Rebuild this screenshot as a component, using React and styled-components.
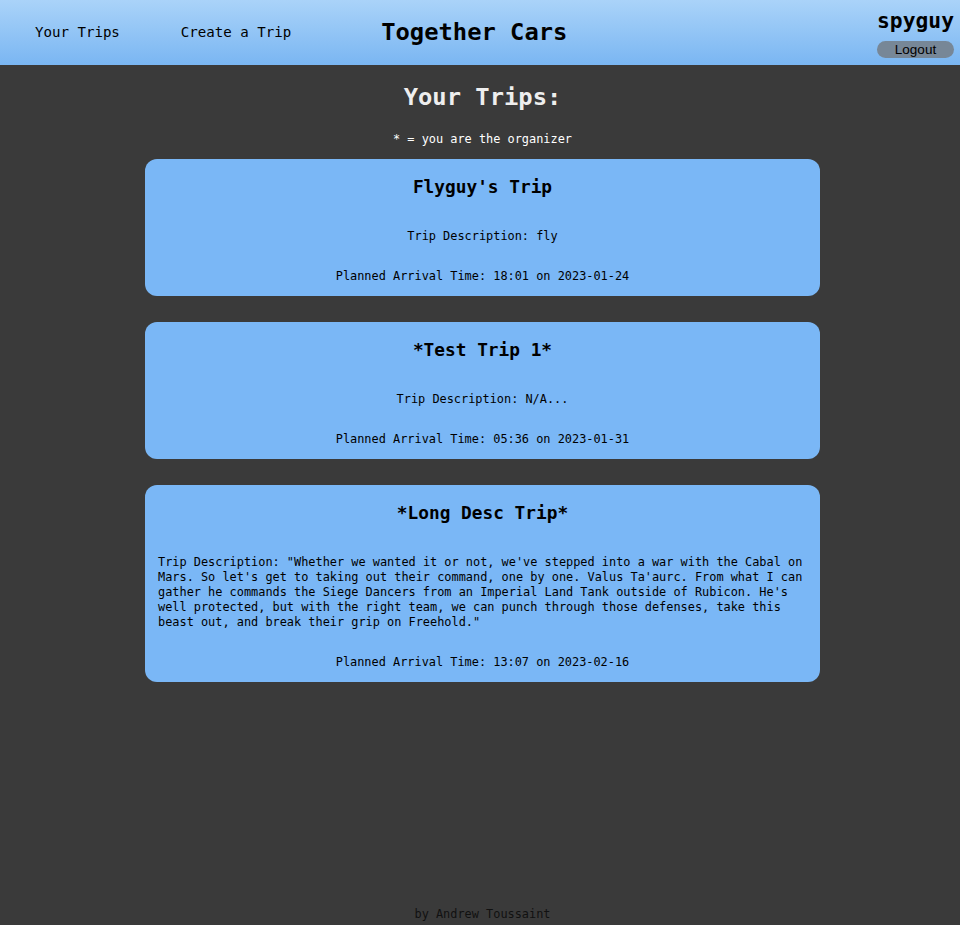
import React from "react";
import styled, { createGlobalStyle } from "styled-components";

const Global = createGlobalStyle`
  html, body { margin: 0; padding: 0; background: #3a3a3a; }
  body { font-family: "DejaVu Sans Mono", "Liberation Mono", monospace; }
`;

const Page = styled.div`
  min-height: 100vh;
  display: flex;
  flex-direction: column;
  background: #3a3a3a;
`;

const Header = styled.header`
  height: 65px;
  background: linear-gradient(to bottom, #aad3f9, #7ab6f2);
  display: flex;
  align-items: center;
  padding: 0 6px 2px 35px;
  box-sizing: border-box;
`;

const NavLink = styled.a`
  font-size: 14.1px;
  color: #000;
  text-decoration: none;
  margin-right: ${(p) => p.$gap}px;
  line-height: 18px;
`;

const Brand = styled.h1`
  margin: 0;
  font-size: 23.8px;
  font-weight: bold;
  color: #000;
  line-height: 28px;
  flex: 1;
`;

const UserBox = styled.div`
  display: flex;
  flex-direction: column;
  align-items: center;
  align-self: flex-start;
  padding-top: 9px;
`;

const UserName = styled.div`
  font-size: 21.3px;
  font-weight: bold;
  line-height: 24px;
  color: #000;
`;

const LogoutButton = styled.button`
  margin-top: 8px;
  width: 77px;
  height: 17px;
  border: none;
  border-radius: 9px;
  background: #778797;
  color: #000;
  font-family: "Liberation Sans", Arial, sans-serif;
  font-size: 13.5px;
  line-height: 17px;
  padding: 0;
`;

const Main = styled.main`
  flex: 1;
  display: flex;
  flex-direction: column;
  align-items: center;
  padding-left: 5px;
`;

const PageTitle = styled.h2`
  margin: 18px 0 0;
  font-size: 23.8px;
  line-height: 28px;
  font-weight: bold;
  color: #eeeeee;
`;

const Note = styled.p`
  margin: 21px 0 0;
  font-size: 11.9px;
  line-height: 15px;
  color: #ffffff;
`;

const CardList = styled.div`
  margin-top: 12px;
  display: flex;
  flex-direction: column;
  gap: 26px;
`;

const Card = styled.section`
  width: 675px;
  box-sizing: border-box;
  background: #7ab7f6;
  border-radius: 12px;
  padding: 17px 13px 12px;
  display: flex;
  flex-direction: column;
  color: #000;
`;

const CardTitle = styled.h3`
  margin: 0;
  text-align: center;
  font-size: 17.8px;
  line-height: 22px;
  font-weight: bold;
`;

const Desc = styled.p`
  margin: 31px 0 0;
  font-size: 11.9px;
  line-height: 15px;
  text-align: ${(p) => (p.$long ? "left" : "center")};
`;

const Arrival = styled.p`
  margin: 25px 0 0;
  font-size: 11.9px;
  line-height: 15px;
  text-align: center;
`;

const Footer = styled.footer`
  text-align: center;
  font-size: 11.9px;
  line-height: 15px;
  color: #111;
  padding: 0 0 3px 5px;
`;

const trips = [
  { name: "Flyguy's Trip", desc: "fly", time: "18:01 on 2023-01-24" },
  { name: "*Test Trip 1*", desc: "N/A...", time: "05:36 on 2023-01-31" },
  {
    name: "*Long Desc Trip*",
    desc:
      "\"Whether we wanted it or not, we've stepped into a war with the Cabal on Mars. So let's get to taking out their command, one by one. Valus Ta'aurc. From what I can gather he commands the Siege Dancers from an Imperial Land Tank outside of Rubicon. He's well protected, but with the right team, we can punch through those defenses, take this beast out, and break their grip on Freehold.\"",
    time: "13:07 on 2023-02-16",
    long: true,
  },
];

export default function App() {
  return (
    <Page>
      <Global />
      <Header>
        <NavLink href="#" $gap={61}>Your Trips</NavLink>
        <NavLink href="#" $gap={90}>Create a Trip</NavLink>
        <Brand>Together Cars</Brand>
        <UserBox>
          <UserName>spyguy</UserName>
          <LogoutButton>Logout</LogoutButton>
        </UserBox>
      </Header>
      <Main>
        <PageTitle>Your Trips:</PageTitle>
        <Note>* = you are the organizer</Note>
        <CardList>
          {trips.map((t) => (
            <Card key={t.name}>
              <CardTitle>{t.name}</CardTitle>
              <Desc $long={t.long}>Trip Description: {t.desc}</Desc>
              <Arrival>Planned Arrival Time: {t.time}</Arrival>
            </Card>
          ))}
        </CardList>
      </Main>
      <Footer>by Andrew Toussaint</Footer>
    </Page>
  );
}
